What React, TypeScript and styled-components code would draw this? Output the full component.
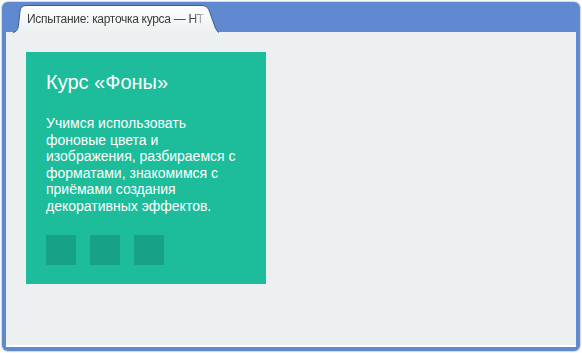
import React from 'react';
import styled, { createGlobalStyle } from 'styled-components';

const GlobalStyle = createGlobalStyle`
  html, body {
    margin: 0;
    padding: 0;
    background: #ffffff;
  }
  body {
    font-family: 'Liberation Sans', Arial, sans-serif;
  }
`;

const Window = styled.div`
  box-sizing: border-box;
  width: 578px;
  height: 349px;
  margin: 2px;
  padding: 3px 4px 4px 4px;
  display: flex;
  flex-direction: column;
  background: #6189d0;
  border-radius: 6px;
  box-shadow: 0 0 1px 1px rgba(120, 140, 180, 0.35);
`;

const TitleBar = styled.div`
  height: 27px;
  display: flex;
  align-items: flex-end;
  padding-left: 7px;
`;

const Tab = styled.div`
  position: relative;
  width: 206px;
  height: 27px;
`;

const TabShape = styled.svg`
  position: absolute;
  left: 0;
  top: 0;
  width: 206px;
  height: 28px;
`;

const TabLabel = styled.div`
  position: relative;
  display: inline-block;
  margin-left: 14px;
  padding-top: 7px;
  font-size: 12px;
  letter-spacing: -0.3px;
  color: #3c3c3c;
  white-space: nowrap;
  -webkit-mask-image: linear-gradient(to right, #000 94%, rgba(0, 0, 0, 0.15) 100%);
  mask-image: linear-gradient(to right, #000 94%, rgba(0, 0, 0, 0.15) 100%);
`;

const Content = styled.main`
  flex: 1;
  padding: 20px;
  background: #ecf0f1;
  border-bottom: 2px solid #ffffff;
`;

const Card = styled.section`
  box-sizing: border-box;
  width: 240px;
  height: 232px;
  padding: 19px 20px 20px;
  background: #1dbc9a;
  color: #ffffff;
`;

const CardTitle = styled.h2`
  margin: 0;
  font-size: 20px;
  font-weight: normal;
  line-height: 23px;
`;

const CardText = styled.p`
  margin: 21px 0 20px;
  font-size: 14px;
  line-height: 16.6px;
`;

const Thumbs = styled.div`
  display: flex;
  gap: 14px;
`;

const Thumb = styled.span`
  width: 30px;
  height: 30px;
  background: #17a185;
`;

const BrowserTab = ({ title }: { title: string }) => (
  <Tab>
    <TabShape viewBox="0 0 206 28">
      <defs>
        <linearGradient id="tabFill" x1="0" y1="0" x2="0" y2="1">
          <stop offset="0" stopColor="#ffffff" />
          <stop offset="1" stopColor="#ecf0f1" />
        </linearGradient>
      </defs>
      <path
        d="M0,28 C3,27 5,25 5.5,20 L7,6 Q8,0.5 13,0.5 L190,0.5 Q194,0.5 196,5 L202,22 Q204,27 206,27 L206,28 Z"
        fill="url(#tabFill)"
      />
      <path
        d="M0,27.5 C3,27 5,25 5.5,20 L7,6 Q8,0.5 13,0.5 L190,0.5 Q194,0.5 196,5 L202,22 Q204,27 206,27.5"
        fill="none"
        stroke="#3d5c96"
        strokeWidth="1"
      />
    </TabShape>
    <TabLabel>{title}</TabLabel>
  </Tab>
);

const App = () => {
  return (
    <>
      <GlobalStyle />
      <Window>
        <TitleBar>
          <BrowserTab title="Испытание: карточка курса — HT" />
        </TitleBar>
        <Content>
          <Card>
            <CardTitle>Курс «Фоны»</CardTitle>
            <CardText>
              Учимся использовать фоновые цвета и изображения, разбираемся с форматами, знакомимся с
              приёмами создания декоративных эффектов.
            </CardText>
            <Thumbs>
              <Thumb />
              <Thumb />
              <Thumb />
            </Thumbs>
          </Card>
        </Content>
      </Window>
    </>
  );
};

export default App;
